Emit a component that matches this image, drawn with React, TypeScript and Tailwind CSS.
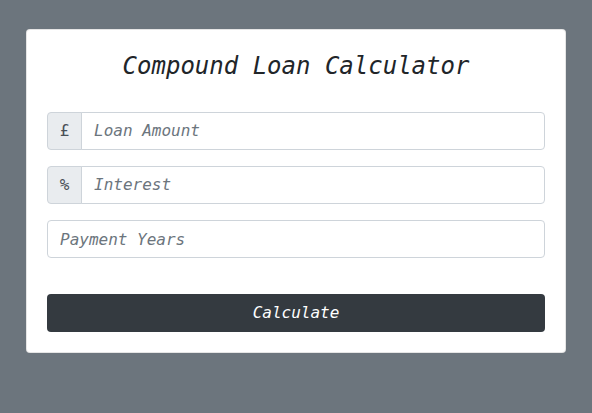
export default function App() {
  const mono = { fontFamily: '"DejaVu Sans Mono", "Liberation Mono", monospace' };
  return (
    <div className="min-h-screen w-full bg-[#6c757d] pt-[29px]" style={mono}>
      <div className="mx-auto w-[540px] rounded-[4px] border border-black/10 bg-white p-5">
        <h1 className="mt-[2px] mb-[31px] text-center text-[24px] italic leading-[1.2] text-[#212529]">
          Compound Loan Calculator
        </h1>
        <form className="flex flex-col gap-4" onSubmit={(e) => e.preventDefault()}>
          <div className="flex h-[38px]">
            <span className="flex w-[35px] items-center justify-center rounded-l-[4px] border border-[#ced4da] bg-[#e9ecef] pt-px text-[16px] text-[#495057]">
              £
            </span>
            <input
              placeholder="Loan Amount"
              className="-ml-px min-w-0 flex-1 rounded-r-[4px] border border-[#ced4da] px-3 pt-px text-[16px] italic text-[#495057] outline-none placeholder:text-[#6c757d]"
            />
          </div>
          <div className="flex h-[38px]">
            <span className="flex w-[35px] items-center justify-center rounded-l-[4px] border border-[#ced4da] bg-[#e9ecef] pt-px text-[16px] text-[#495057]">
              %
            </span>
            <input
              placeholder="Interest"
              className="-ml-px min-w-0 flex-1 rounded-r-[4px] border border-[#ced4da] px-3 pt-px text-[16px] italic text-[#495057] outline-none placeholder:text-[#6c757d]"
            />
          </div>
          <input
            placeholder="Payment Years"
            className="h-[38px] rounded-[4px] border border-[#ced4da] px-3 pt-px text-[16px] italic text-[#495057] outline-none placeholder:text-[#6c757d]"
          />
          <button
            type="submit"
            className="mt-5 h-[38px] w-full rounded-[4px] bg-[#343a40] pt-px text-[16px] italic text-white"
          >
            Calculate
          </button>
        </form>
      </div>
    </div>
  );
}
